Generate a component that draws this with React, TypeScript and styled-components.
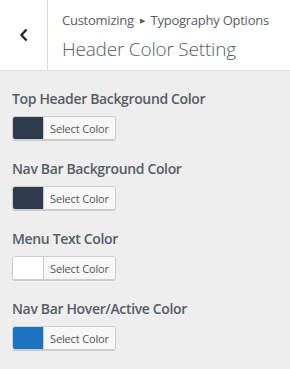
import React from "react";
import styled, { createGlobalStyle } from "styled-components";

const Global = createGlobalStyle`
  html, body { margin: 0; padding: 0; }
  body {
    background: #eeeeee;
    font-family: "Open Sans", "Noto Sans", sans-serif;
    color: #555d66;
  }
`;

const Panel = styled.div`
  width: 290px;
  height: 369px;
  background: #eeeeee;
  overflow: hidden;
`;

const Header = styled.div`
  display: flex;
  height: 70px;
  background: #ffffff;
  border-bottom: 1px solid #dddddd;
`;

const BackButton = styled.div`
  width: 47px;
  flex: none;
  display: flex;
  align-items: center;
  justify-content: center;
  border-right: 1px solid #dddddd;
  color: #23282d;
`;

const TitleBlock = styled.div`
  display: flex;
  flex-direction: column;
  padding: 11px 0 0 14px;
`;

const Breadcrumb = styled.div`
  font-size: 13px;
  line-height: 18px;
  color: #555d66;
  letter-spacing: -0.25px;
  white-space: nowrap;
`;

const Arrow = styled.span`
  font-size: 7px;
  margin: 0 6px;
  vertical-align: 2px;
`;

const Title = styled.div`
  margin-top: 7px;
  font-size: 19px;
  font-weight: 300;
  line-height: 24px;
  color: #555d66;
  letter-spacing: -0.2px;
  white-space: nowrap;
`;

const Controls = styled.div`
  display: flex;
  flex-direction: column;
  padding: 18px 12px 0;
  gap: 19px;
`;

const Control = styled.div`
  display: flex;
  flex-direction: column;
  align-items: flex-start;
  gap: 7px;
`;

const Label = styled.div`
  font-size: 14px;
  font-weight: 600;
  line-height: 20px;
  color: #555d66;
  letter-spacing: -0.35px;
  white-space: nowrap;
`;

const ColorButton = styled.div`
  display: flex;
  height: 22px;
  border: 1px solid #cccccc;
  border-radius: 3px;
  box-shadow: 0 1px 0 #cccccc;
  overflow: hidden;
`;

const Swatch = styled.div<{ $color: string }>`
  width: 30px;
  background: ${(p) => p.$color};
`;

const ButtonText = styled.div`
  display: flex;
  align-items: center;
  padding: 0 6px;
  background: #f7f7f7;
  border-left: 1px solid #cccccc;
  font-size: 11px;
  color: #555555;
  letter-spacing: -0.15px;
`;

const items = [
  { label: "Top Header Background Color", color: "#2e3c4b" },
  { label: "Nav Bar Background Color", color: "#2e3c4b" },
  { label: "Menu Text Color", color: "#ffffff" },
  { label: "Nav Bar Hover/Active Color", color: "#1e73be" },
];

export default function App() {
  return (
    <Panel>
      <Global />
      <Header>
        <BackButton>
          <svg width="10" height="14" viewBox="0 0 10 14">
            <path d="M7.5 1.5 L2.5 7 L7.5 12.5" fill="none" stroke="#23282d" strokeWidth="2.4" />
          </svg>
        </BackButton>
        <TitleBlock>
          <Breadcrumb>
            Customizing<Arrow>▶</Arrow>Typography Options
          </Breadcrumb>
          <Title>Header Color Setting</Title>
        </TitleBlock>
      </Header>
      <Controls>
        {items.map((it) => (
          <Control key={it.label}>
            <Label>{it.label}</Label>
            <ColorButton>
              <Swatch $color={it.color} />
              <ButtonText>Select Color</ButtonText>
            </ColorButton>
          </Control>
        ))}
      </Controls>
    </Panel>
  );
}
